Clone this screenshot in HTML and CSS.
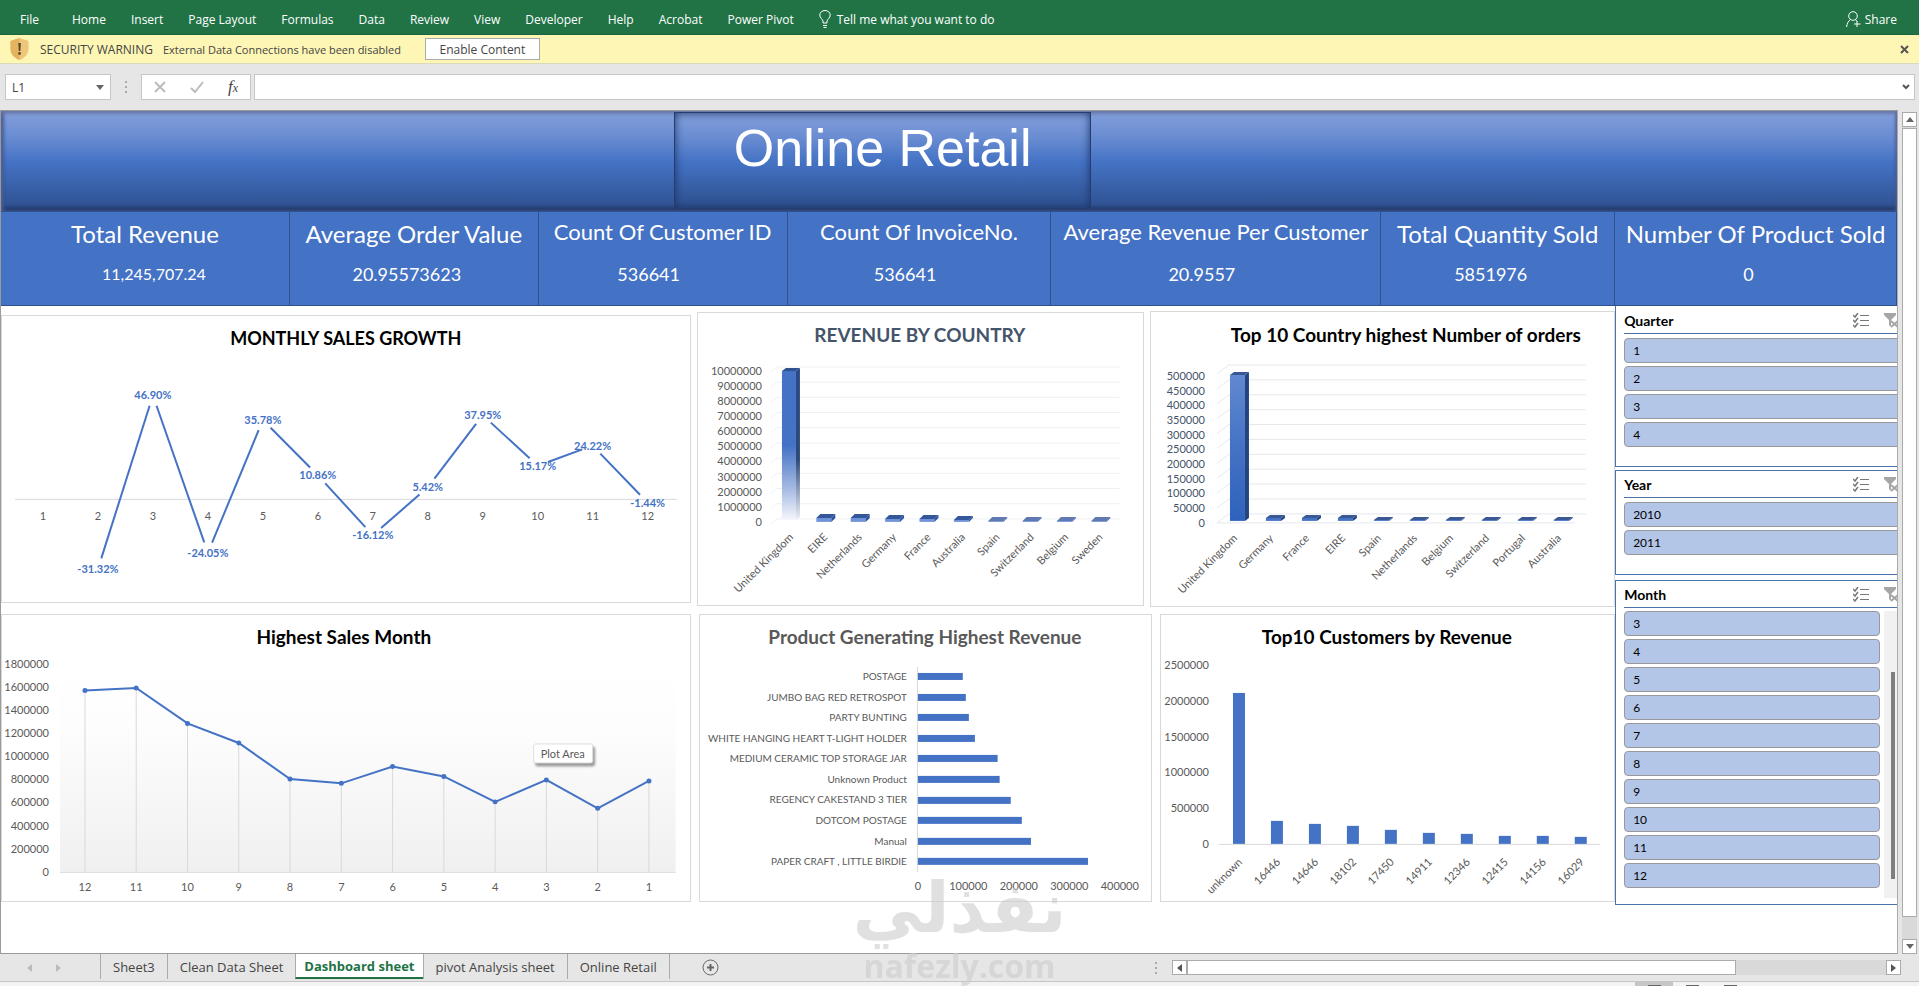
FILE: index.html
```html
<!DOCTYPE html>
<html lang="en">
<head>
  <meta charset="UTF-8">
  <meta name="viewport" content="width=device-width, initial-scale=1.0">
  <title>Online Retail</title>
  <link rel="stylesheet" href="styles.css">
</head>
<body>

  <nav class="ribbon">
    <button class="file">File</button>
    <button>Home</button>
    <button>Insert</button>
    <button>Page Layout</button>
    <button>Formulas</button>
    <button>Data</button>
    <button>Review</button>
    <button>View</button>
    <button>Developer</button>
    <button>Help</button>
    <button>Acrobat</button>
    <button>Power Pivot</button>
    <button class="with-icon">
      <svg width="12" height="18" viewBox="0 0 12 18" fill="none" stroke="#fff"><path d="M4 13v-2C3.500 9 .8 8 .8 5a5.200 4.500 0 0 1 10.400 0C11.200 8 8.500 9 8 11v2zM4 15.500h4M4.500 17.500h3"/></svg>
      Tell me what you want to do
    </button>
    <button class="with-icon share">
      <svg width="15" height="17" viewBox="0 0 15 17" fill="none" stroke="#fff"><circle cx="7" cy="5" r="4.300"/><path d="M4.500 8.500C2.500 10 1 12 .6 16M9.500 8.500l1.500 2M11 10v6M8 13h6.500"/></svg>
      Share
    </button>
  </nav>

  <div class="warning">
    <svg width="19" height="22" viewBox="0 0 19 22"><path d="M9.500 0l9 3v8c0 5-4 9-9 11-5-2-9-6-9-11V3z" fill="#edc679"/><path d="M9.500 0v22c-5-2-9-6-9-11V3z" fill="#e5b35f"/><path d="M8.300 5h2.600l-.5 8H8.800z" fill="#5a4a30"/><circle cx="9.600" cy="15.500" r="1.400" fill="#5a4a30"/></svg>
    <span class="warning-title">SECURITY WARNING</span>
    <span class="warning-text">External Data Connections have been disabled</span>
    <button class="enable">Enable Content</button>
    <button class="close" aria-label="Close"><svg width="9" height="9" viewBox="0 0 9 9" stroke="#555" stroke-width="2"><path d="M1 1l7 7M8 1L1 8"/></svg></button>
  </div>

  <div class="formula-bar">
    <div class="name-box">
      <input type="text" value="L1" aria-label="Name box">
      <button aria-label="Cell names"><svg width="8" height="5" viewBox="0 0 8 5"><path d="M0 0h8L4 5z" fill="#666"/></svg></button>
    </div>
    <span class="dots"></span>
    <div class="formula-buttons">
      <button aria-label="Cancel"><svg width="12" height="12" viewBox="0 0 12 12" stroke="#bbb" stroke-width="2"><path d="M1 1l10 10M11 1L1 11"/></svg></button>
      <button aria-label="Enter"><svg width="14" height="12" viewBox="0 0 14 12" fill="none" stroke="#bbb" stroke-width="2"><path d="M1 7l4 4 8-10"/></svg></button>
      <button class="fx" aria-label="Insert function">f<small>x</small></button>
    </div>
    <div class="formula-input">
      <input type="text" aria-label="Formula">
      <button aria-label="Expand"><svg width="8" height="6" viewBox="0 0 8 6" fill="none" stroke="#555" stroke-width="2"><path d="M1 1l3 3 3-3"/></svg></button>
    </div>
  </div>

  <div class="workspace">
    <main class="sheet">
      <header class="banner"><h1>Online Retail</h1></header>

      <section class="kpis">
        <div class="kpi kpi-first"><h2>Total Revenue</h2><p>11,245,707.24</p></div>
        <div class="kpi kpi-large"><h2>Average Order Value</h2><p>20.95573623</p></div>
        <div class="kpi"><h2>Count Of Customer ID</h2><p>536641</p></div>
        <div class="kpi"><h2>Count Of InvoiceNo.</h2><p>536641</p></div>
        <div class="kpi"><h2>Average Revenue Per Customer</h2><p>20.9557</p></div>
        <div class="kpi kpi-large"><h2>Total Quantity Sold</h2><p>5851976</p></div>
        <div class="kpi kpi-large"><h2>Number Of Product Sold</h2><p>0</p></div>
      </section>

      <div class="board">
        <div class="charts">
          <div class="chart-row row-top">
            <figure class="card"><svg id="growth" viewBox="0 0 688 286" role="img" aria-label="Monthly sales growth"></svg></figure>
            <figure class="card"><svg id="country" viewBox="0 0 446 292" role="img" aria-label="Revenue by country"></svg></figure>
            <figure class="card"><svg id="orders" viewBox="0 0 463 294" role="img" aria-label="Top 10 countries by orders"></svg></figure>
          </div>
          <div class="chart-row row-bottom">
            <figure class="card"><svg id="months" viewBox="0 0 688 286" role="img" aria-label="Highest sales month"></svg></figure>
            <figure class="card"><svg id="products" viewBox="0 0 452 286" role="img" aria-label="Product generating highest revenue"></svg></figure>
            <figure class="card"><svg id="customers" viewBox="0 0 453 286" role="img" aria-label="Top 10 customers by revenue"></svg></figure>
          </div>
        </div>

        <aside class="slicers">
          <section class="slicer quarter">
            <header><h3>Quarter</h3><span class="tools"></span></header>
            <div class="items"><button>1</button><button>2</button><button>3</button><button>4</button></div>
          </section>
          <section class="slicer year">
            <header><h3>Year</h3><span class="tools"></span></header>
            <div class="items"><button>2010</button><button>2011</button></div>
          </section>
          <section class="slicer month">
            <header><h3>Month</h3><span class="tools"></span></header>
            <div class="scroll-items">
              <div class="items">
                <button>3</button><button>4</button><button>5</button><button>6</button><button>7</button>
                <button>8</button><button>9</button><button>10</button><button>11</button><button>12</button>
              </div>
              <div class="month-track"><div class="month-thumb"></div></div>
            </div>
          </section>
        </aside>
      </div>
    </main>

    <div class="vscroll">
      <button aria-label="Scroll up"><svg width="8" height="5" viewBox="0 0 8 5"><path d="M0 5h8L4 0z" fill="#666"/></svg></button>
      <div class="vthumb"></div>
      <button aria-label="Scroll down"><svg width="8" height="5" viewBox="0 0 8 5"><path d="M0 0h8L4 5z" fill="#666"/></svg></button>
    </div>
  </div>

  <footer class="tabbar">
    <div class="tab-arrows">
      <button aria-label="Previous sheet"><svg width="5" height="8" viewBox="0 0 5 8"><path d="M5 0v8L0 4z" fill="#bbb"/></svg></button>
      <button aria-label="Next sheet"><svg width="5" height="8" viewBox="0 0 5 8"><path d="M0 0v8l5-4z" fill="#bbb"/></svg></button>
    </div>
    <div class="tabs">
      <button>Sheet3</button>
      <button>Clean Data Sheet</button>
      <button class="active">Dashboard sheet</button>
      <button>pivot Analysis sheet</button>
      <button>Online Retail</button>
    </div>
    <button class="add" aria-label="New sheet"><svg width="17" height="17" viewBox="0 0 17 17" fill="none" stroke="#666"><circle cx="8.500" cy="8.500" r="7.500"/><path d="M8.500 5v7M5 8.500h7" stroke-width="2"/></svg></button>
    <span class="dots"></span>
    <div class="hscroll">
      <button aria-label="Scroll left"><svg width="5" height="8" viewBox="0 0 5 8"><path d="M5 0v8L0 4z" fill="#555"/></svg></button>
      <div class="hthumb"></div>
      <button aria-label="Scroll right"><svg width="5" height="8" viewBox="0 0 5 8"><path d="M0 0v8l5-4z" fill="#555"/></svg></button>
    </div>
  </footer>
  <div class="status"><span class="view on"></span><span class="view"></span><span class="view"></span></div>

  <div class="watermark"><span lang="ar" dir="rtl">نفذلي</span><span>nafezly.com</span></div>

  <script src="charts.js"></script>
</body>
</html>
```
FILE: styles.css
```css
* {
  box-sizing: border-box;
}

body {
  margin: 0;
  height: 100vh;
  display: flex;
  flex-direction: column;
  overflow: hidden;
  background: #e6e6e6;
  font-family: "Open Sans", sans-serif;
  font-size: 12px;
  color: #444;
}

button, input {
  font: inherit;
  color: inherit;
  margin: 0;
  padding: 0;
  border: 0;
  background: none;
}

h1, h2, h3, p, figure {
  margin: 0;
}

svg {
  display: block;
}

/* Ribbon */
.ribbon {
  display: flex;
  align-items: center;
  gap: 25px;
  height: 35px;
  padding: 4px 22px 0 20px;
  background: #217346;
  border-bottom: 1px solid #1c653c;
  color: #fff;
  white-space: nowrap;
}

.ribbon .file {
  margin-right: 8px;
}

.with-icon {
  display: flex;
  align-items: center;
  gap: 6px;
}

.share {
  margin-left: auto;
  gap: 4px;
}

/* Security warning */
.warning {
  display: flex;
  align-items: center;
  height: 29px;
  padding: 0 10px;
  background: #fdf6b5;
  border-bottom: 1px solid #dcd8bc;
  white-space: nowrap;
}

.warning-title {
  margin: 0 10px 0 11px;
}

.warning-text {
  font-size: 11px;
}

.enable {
  margin-left: 24px;
  width: 115px;
  height: 22px;
  background: #fff;
  border: 1px solid #ababab;
}

.close {
  margin-left: auto;
}

/* Formula bar */
.formula-bar {
  display: flex;
  align-items: center;
  height: 46px;
  padding: 0 4px 0 5px;
}

.name-box, .formula-buttons, .formula-input {
  display: flex;
  align-items: center;
  height: 26px;
  background: #fff;
  border: 1px solid #c6c6c6;
}

.name-box {
  width: 106px;
  padding: 0 6px;
}

.name-box input, .formula-input input {
  flex: 1;
  min-width: 0;
}

.dots {
  width: 2px;
  height: 12px;
  margin: 0 14px;
  background: repeating-linear-gradient(#aaa 0 2px, transparent 2px 5px);
}

.formula-buttons {
  width: 110px;
  justify-content: space-between;
  padding: 0 12px;
  margin-right: 3px;
}

.fx {
  font: italic 17px "Liberation Serif", serif;
  color: #444;
}

.fx small {
  font-size: 12px;
}

.formula-input {
  flex: 1;
  padding: 0 4px;
}

/* Sheet */
.workspace {
  flex: 1;
  display: flex;
  min-height: 0;
}

.sheet {
  flex: 1;
  overflow: hidden;
  background: #fff;
  border: 1px solid #9a9a9a;
  border-right-color: #ababab;
  font-family: Lato, sans-serif;
}

.banner, .banner h1 {
  background: linear-gradient(#849fdb, #6a8dd2 25%, #4472c4 52%, #2d4f8c);
}

.banner {
  height: 100px;
  padding: 1px 0;
  box-shadow: inset 0 2px 4px #6b78a8, inset 2px 0 4px #3c5590, inset 0 -3px 4px #1c2f5c;
}

.banner h1 {
  width: 22%;
  height: 97px;
  margin-left: 35.5%;
  border: 1px solid #243c70;
  box-shadow: inset 0 0 8px #1c3365;
  font: 52px/70px "Liberation Sans", sans-serif;
  text-align: center;
  white-space: nowrap;
  color: #fff;
}

.kpis {
  display: grid;
  grid-template-columns: 289fr 249fr 249fr 264fr 330fr 234fr 282fr;
}

.kpi {
  min-width: 0;
  height: 95px;
  padding-top: 6px;
  background: #4472c4;
  border: 1px solid #2f528f;
  border-left-width: 0;
  color: #fff;
  text-align: center;
  white-space: nowrap;
}

.kpi h2 {
  font-size: 22px;
  font-weight: 400;
  line-height: 28px;
}

.kpi p {
  padding-right: 28px;
  font-size: 18px;
  line-height: 24px;
  margin-top: 16px;
}

.kpi-first h2, .kpi-large h2 {
  font-size: 24px;
  line-height: 32px;
}

.kpi-first p {
  padding: 0 0 0 18px;
  font-size: 16px;
}

.kpi-first p, .kpi-large p {
  margin-top: 12px;
}

.kpi-large p {
  padding-right: 14px;
}

.board {
  display: grid;
  grid-template-columns: 1615fr 282fr;
}

.charts {
  min-width: 0;
  padding-top: 5px;
}

.chart-row {
  display: grid;
  align-items: center;
}

.row-top {
  grid-template-columns: 690fr 448fr 465fr;
  gap: 6px;
  margin-bottom: 7px;
}

.row-bottom {
  grid-template-columns: 690fr 454fr 455fr;
  gap: 8px;
}

.card {
  border: 1px solid #d9d9d9;
}

.card svg {
  width: 100%;
  height: auto;
}

/* Chart parts */
.card text {
  font-size: 11px;
  fill: #595959;
}

.card .title {
  font-size: 19px;
  font-weight: 700;
  fill: #000;
  text-anchor: middle;
}

.card .caps {
  font-size: 18px;
}

.card .slate {
  fill: #44546a;
}

.card .gray {
  fill: #595959;
}

.card .mid {
  text-anchor: middle;
}

.card .end {
  text-anchor: end;
}

.card .value {
  font-weight: 700;
  fill: #4472c4;
  text-anchor: middle;
}

.card .product {
  font-size: 10px;
  text-anchor: end;
}

.axis {
  stroke: #d9d9d9;
}

.grid {
  fill: none;
  stroke: #e6e8ee;
}

.grid.faint {
  stroke: #eff0f4;
}

.series {
  fill: none;
  stroke: #4472c4;
  stroke-width: 2;
}

.bar {
  fill: #4472c4;
}

.tip {
  fill: #fff;
  stroke: #ddd;
  filter: drop-shadow(2px 3px 1px #999);
}

/* Slicers */
.slicer {
  margin-right: -12px;
  padding-left: 8px;
  background: #fff;
  border: 1px solid #4a73ac;
}

.slicer header {
  display: flex;
  align-items: center;
  justify-content: space-between;
  height: 27px;
  padding-right: 7px;
  border-bottom: 1px solid #4a73ac;
}

.slicer h3 {
  font-size: 14px;
  color: #000;
}

.tools {
  display: flex;
  gap: 14px;
}

.items {
  flex: 1;
  display: flex;
  flex-direction: column;
  gap: 3px;
  margin-top: 4px;
}

.items button {
  height: 25px;
  padding-left: 8px;
  text-align: left;
  background: #b4c6e7;
  border: 1px solid #999;
  border-radius: 4px;
  color: #000;
}

.quarter {
  border-top: 0;
  padding-top: 1px;
  padding-bottom: 19px;
  margin-bottom: 3px;
}

.year {
  padding-bottom: 19px;
  margin-bottom: 5px;
}

.month {
  padding-bottom: 6px;
}

.scroll-items {
  display: flex;
  gap: 4px;
}

.scroll-items .items {
  margin-top: 3px;
  padding-bottom: 10px;
}

.month-track {
  width: 24px;
  margin-top: 3px;
  padding: 61px 0 19px 7px;
  background: #f1f1f1;
}

.month-thumb {
  width: 4px;
  height: 100%;
  background: #7f7f7f;
}

/* Scroll bars */
.vscroll {
  display: flex;
  flex-direction: column;
  width: 15px;
  margin: 2px 2px 0 4px;
  background: #d9d9d9;
}

.vscroll button, .hscroll button {
  display: flex;
  align-items: center;
  justify-content: center;
  width: 15px;
  height: 15px;
  background: #fff;
  border: 1px solid #ababab;
}

.vthumb {
  flex: 1;
  margin: 1px 0 22px;
  background: #fff;
  border: 1px solid #ababab;
}

/* Sheet tabs */
.tabbar {
  display: flex;
  align-items: center;
  height: 28px;
  border-bottom: 1px solid #c6c6c6;
  font-size: 13px;
  white-space: nowrap;
}

.tab-arrows {
  display: flex;
  gap: 24px;
  width: 100px;
  padding-left: 27px;
}

.tabs {
  display: flex;
  align-self: stretch;
  padding-bottom: 2px;
}

.tabs button {
  padding: 0 12px;
  border-left: 1px solid #ababab;
}

.tabs button:last-child {
  border-right: 1px solid #ababab;
}

.tabs .active {
  padding: 0 8px;
  background: #fff;
  border-bottom: 2px solid #217346;
  color: #217346;
  font-weight: 700;
}

.add {
  margin-left: 32px;
}

.tabbar .dots {
  margin: 0 15px 0 auto;
}

.hscroll {
  display: flex;
  width: 38%;
  margin-right: 18px;
  background: #d9d9d9;
}

.hthumb {
  flex: 1;
  margin-right: 150px;
  background: #fff;
  border: 1px solid #ababab;
}

.status {
  display: flex;
  align-items: flex-end;
  justify-content: flex-end;
  height: 4px;
  padding-right: 170px;
  background: #f3f3f3;
}

.view {
  display: flex;
  justify-content: center;
  width: 38px;
}

.view::before {
  content: "";
  width: 13px;
  height: 1px;
  background: #666;
}

.view.on {
  padding-top: 3px;
  background: #c6c6c6;
}

/* Watermark lies over the sheet and the tab bar */
.watermark {
  position: absolute;
  left: 50%;
  bottom: 0;
  transform: translateX(-50%);
  display: flex;
  flex-direction: column;
  align-items: center;
  font: bold 32px/40px "Open Sans", "DejaVu Sans", sans-serif;
  color: #ccc;
  opacity: 0.6;
  pointer-events: none;
}

.watermark [lang="ar"] {
  font: bold 70px/76px "DejaVu Sans", sans-serif;
}
```
FILE: charts.js
```js
var selectIcon = '<svg width="17" height="15" viewBox="0 0 17 15" fill="none" stroke="#777">' +
  '<path d="M0 2l2 2 3-4M0 7l2 2 3-4M0 12l2 2 3-4" stroke-width="1.500"/><path d="M7 2.500h9M7 7.500h9M7 12.500h9"/></svg>';
var filterIcon = '<svg width="17" height="15" viewBox="0 0 17 15">' +
  '<path d="M0 0h12v2L7 7v7l-2-2V7L0 2z" fill="#a6a6a6"/><path d="M7 8l7 6M14 8l-7 6" stroke="#a6a6a6" stroke-width="2"/></svg>';

document.querySelectorAll(".tools").forEach(function (el) {
  el.innerHTML = selectIcon + filterIcon;
});

function text(x, y, str, cls) {
  return '<text x="' + x + '" y="' + y + '" class="' + cls + '">' + str + '</text>';
}

function slanted(x, y, str) {
  return '<text class="end" transform="translate(' + x + ' ' + y + ') rotate(-45)">' + str + '</text>';
}

function line(x1, y1, x2, y2, cls) {
  return '<line x1="' + x1 + '" y1="' + y1 + '" x2="' + x2 + '" y2="' + y2 + '" class="' + cls + '"/>';
}

function rect(x, y, w, h, fill) {
  return '<rect x="' + x + '" y="' + y + '" width="' + w + '" height="' + h + '" fill="' + fill + '"/>';
}

function gradient(id, stops) {
  var out = '<linearGradient id="' + id + '" x1="0" y1="0" x2="0" y2="1">';
  stops.forEach(function (s) {
    out += '<stop offset="' + s[0] + '" stop-color="' + s[1] + '"/>';
  });
  return out + '</linearGradient>';
}

function draw(id, content) {
  document.getElementById(id).innerHTML = content;
}

function drawGrowth() {
  var values = [null, -31.32, 46.90, -24.05, 35.78, 10.86, -16.12, 5.42, 37.95, 15.17, 24.22, -1.44];
  var zero = 183.5, gap = 11;
  var out = text(344, 29, "MONTHLY SALES GROWTH", "title caps") + line(13, zero, 675, zero, "axis");
  var last = null;

  values.forEach(function (v, i) {
    var x = 41 + 55 * i;
    out += text(x, 204, i + 1, "mid");
    if (v === null) return;
    var y = zero - v * 2.22;
    if (last) {
      // stop the line short of the labels
      var dx = x - last.x, dy = y - last.y, len = Math.sqrt(dx * dx + dy * dy);
      var gx = dx / len * gap, gy = dy / len * gap;
      out += line(last.x + gx, last.y + gy, x - gx, y - gy, "series");
    }
    out += text(x, y + 4, v.toFixed(2) + "%", "value");
    last = { x: x, y: y };
  });
  draw("growth", out);
}

// One 3D column: front, side and top faces
function column(x, base, w, h, dx, dy, fill, side, top) {
  var y = base - h, r = x + w;
  return rect(x, y, w, h, fill) +
    '<path d="M' + r + ' ' + base + 'V' + y + 'l' + dx + ' ' + -dy + 'V' + (base - dy) + 'z" fill="' + side + '"/>' +
    '<path d="M' + x + ' ' + y + 'H' + r + 'l' + dx + ' ' + -dy + 'H' + (x + dx) + 'z" fill="' + top + '"/>';
}

function drawCountry() {
  var names = ["United Kingdom", "EIRE", "Netherlands", "Germany", "France", "Australia", "Spain", "Switzerland", "Belgium", "Sweden"];
  var heights = [149, 4, 4, 3, 3, 2, 1, 1, 1, 1];
  var out = gradient("fade", [[0, "#4472c4"], [0.5, "#4472c4"], [0.8, "#a9bde4"], [1, "#f4f6fc"]]) +
    gradient("fadeSide", [[0, "#2b4a86"], [0.6, "#2b4a78"], [1, "#eef0f8"]]) +
    text(222, 29, "REVENUE BY COUNTRY", "title slate");

  for (var i = 0; i <= 10; i++) {
    out += '<path class="grid faint" d="M73 ' + (59 + 15.2 * i) + 'l6 -5H422"/>';
    out += text(64, 62 + 15.1 * i, (10 - i) * 1000000, "end");
  }
  names.forEach(function (name, i) {
    var x = 84 + 34.4 * i;
    if (i === 0) {
      out += column(x, 207, 14, heights[i], 4, 3, "url(#fade)", "url(#fadeSide)", "#2f528f");
    } else {
      out += column(x, 209, 15, heights[i], 4, 4, "#6f93d8", "#2f52a0", i > 5 ? "#6079b0" : "#34579b");
    }
    out += slanted(x + 12, 225, name);
  });
  draw("country", out);
}

function drawOrders() {
  var names = ["United Kingdom", "Germany", "France", "EIRE", "Spain", "Netherlands", "Belgium", "Switzerland", "Portugal", "Australia"];
  var heights = [146, 3, 3, 3, 1, 1, 1, 1, 1, 1];
  var out = gradient("blue", [[0, "#6189d0"], [0.5, "#4472c4"], [1, "#2f62bd"]]) +
    text(255, 30, "Top 10 Country highest Number of orders", "title");

  for (var i = 0; i <= 10; i++) {
    out += '<path class="grid" d="M66 ' + (62 + 14.9 * i) + 'l12 -9H435"/>';
    out += text(54, 68 + 14.7 * i, (10 - i) * 50000, "end slate");
  }
  out += line(66, 211, 424, 211, "grid");
  names.forEach(function (name, i) {
    var x = 79 + 36 * i;
    out += column(x, 209, 15, heights[i], 4, 3, i ? "#4472c4" : "url(#blue)", "#24447f", "#3a5894");
    out += slanted(x + 8, 227, name);
  });
  draw("orders", out);
}

function drawMonths() {
  var values = [1.572, 1.593, 1.287, 1.118, 0.807, 0.769, 0.915, 0.829, 0.609, 0.799, 0.553, 0.790];
  var base = 257.5, points = "", dots = "";
  var out = gradient("plot", [[0, "#fff"], [0.3, "#fdfdfd"], [1, "#f0f0f0"]]) + rect(58, 50, 616, 207, "url(#plot)") +
    text(342, 29, "Highest Sales Month", "title") + line(58, base, 674, base, "axis");

  for (var i = 0; i <= 9; i++) {
    out += text(47, 53 + 23.1 * i, (9 - i) * 200000, "end");
  }
  values.forEach(function (v, i) {
    var x = 83 + 51.3 * i, y = base - v * 115.8;
    out += line(x, y, x, base, "axis") + text(x, 276, 12 - i, "mid");
    points += x + "," + y + " ";
    dots += '<circle class="bar" cx="' + x + '" cy="' + y + '" r="2.5"/>';
  });
  out += '<polyline class="series" points="' + points + '"/>' + dots;
  out += '<rect class="tip" x="532" y="129" width="59" height="19" rx="2"/>' + text(561, 143, "Plot Area", "mid");
  draw("months", out);
}

function drawProducts() {
  var rows = [
    ["POSTAGE", 89], ["JUMBO BAG RED RETROSPOT", 95], ["PARTY BUNTING", 101],
    ["WHITE HANGING HEART T-LIGHT HOLDER", 113], ["MEDIUM CERAMIC TOP STORAGE JAR", 158],
    ["Unknown Product", 162], ["REGENCY CAKESTAND 3 TIER", 184], ["DOTCOM POSTAGE", 206],
    ["Manual", 224], ["PAPER CRAFT , LITTLE BIRDIE", 337]
  ];
  var out = text(225, 29, "Product Generating Highest Revenue", "title gray") + line(217.5, 52, 217.5, 257, "axis");

  rows.forEach(function (row, i) {
    var y = 61 + 20.6 * i;
    out += text(207, y + 4, row[0], "product") + rect(218, Math.round(y - 3), row[1] * 0.505, 7, "#4472c4");
  });
  for (var i = 0; i <= 4; i++) {
    out += text(218 + 50.5 * i, 275, i * 100000, "mid");
  }
  draw("products", out);
}

function drawCustomers() {
  var rows = [["unknown", 2103], ["16446", 320], ["14646", 279], ["18102", 251], ["17450", 195],
    ["14911", 153], ["12346", 139], ["12415", 112], ["14156", 111], ["16029", 97]];
  var out = text(226, 29, "Top10 Customers by Revenue", "title") + line(58, 229.5, 439, 229.5, "axis");

  for (var i = 0; i <= 5; i++) {
    out += text(48, 54 + 35.8 * i, (5 - i) * 500000, "end");
  }
  rows.forEach(function (row, i) {
    var x = 72 + 38 * i, h = Math.round(row[1] * 0.0718);
    out += rect(x, 229 - h, 12, h, "#4472c4") + slanted(x + 10, 248, row[0]);
  });
  draw("customers", out);
}

drawGrowth();
drawCountry();
drawOrders();
drawMonths();
drawProducts();
drawCustomers();
```
